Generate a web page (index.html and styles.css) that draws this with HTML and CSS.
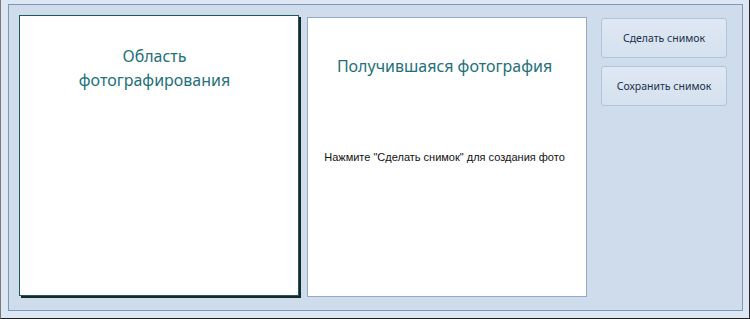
FILE: index.html
```html
<!DOCTYPE html>
<html lang="ru">
<head>
  <meta charset="UTF-8">
  <meta name="viewport" content="width=device-width, initial-scale=1.0">
  <title>Фото</title>
  <link rel="stylesheet" href="styles.css">
</head>
<body>

  <div class="window">
    <div class="panel">
      <div class="capture-box">
        <h2 class="box-title">Область<br>фотографирования</h2>
      </div>

      <div class="result-box">
        <h2 class="box-title">Получившаяся фотография</h2>
        <p class="hint">Нажмите "Сделать снимок" для создания фото</p>
      </div>

      <div class="actions">
        <button class="action-btn">Сделать снимок</button>
        <button class="action-btn">Сохранить снимок</button>
      </div>
    </div>
  </div>

</body>
</html>
```

FILE: styles.css
```css
body {
  margin: 0;
  font-family: "Noto Sans", "Open Sans", sans-serif;
  background-color: #dfe8f3;
}

.window {
  width: 750px;
  height: 319px;
  box-sizing: border-box;
  background-color: #dde7f3;
  border-left: 1px solid #7a7a7a;
  border-right: 1px solid #2b2b2b;
  border-bottom: 1px solid #1f1f1f;
  padding: 4px 6px 7px 7px;
}

.panel {
  height: 100%;
  box-sizing: border-box;
  background-color: #cfdcec;
  border: 1px solid #7f98b9;
  padding: 10px 0 0 10px;
  display: flex;
  align-items: flex-start;
}

.capture-box {
  width: 280px;
  height: 281px;
  box-sizing: border-box;
  background-color: white;
  border: 1px solid #1d5a60;
  box-shadow: 2px 2px 0 #17282a;
  padding: 28px 9px 0 0;
  text-align: center;
}

.box-title {
  margin: 0;
  font-size: 16px;
  font-weight: normal;
  line-height: 24px;
  color: #23707a;
}

.result-box {
  width: 280px;
  height: 280px;
  box-sizing: border-box;
  margin: 2px 0 0 8px;
  background-color: white;
  border: 1px solid #93a9c6;
  padding: 36px 5px 0 0;
  text-align: center;
}

.hint {
  margin: 73px 0 0;
  font-family: "Liberation Sans", Arial, sans-serif;
  font-size: 11px;
  color: #111;
}

.actions {
  margin: 3px 0 0 14px;
  display: flex;
  flex-direction: column;
  gap: 8px;
}

.action-btn {
  width: 126px;
  height: 40px;
  padding: 0 0 1px;
  background: linear-gradient(#dfe8f4, #d5e1ef);
  border: 1px solid #b3c4da;
  border-radius: 3px;
  font-family: "Noto Sans", sans-serif;
  font-size: 10.5px;
  color: #1c2f4a;
  cursor: pointer;
}
```
